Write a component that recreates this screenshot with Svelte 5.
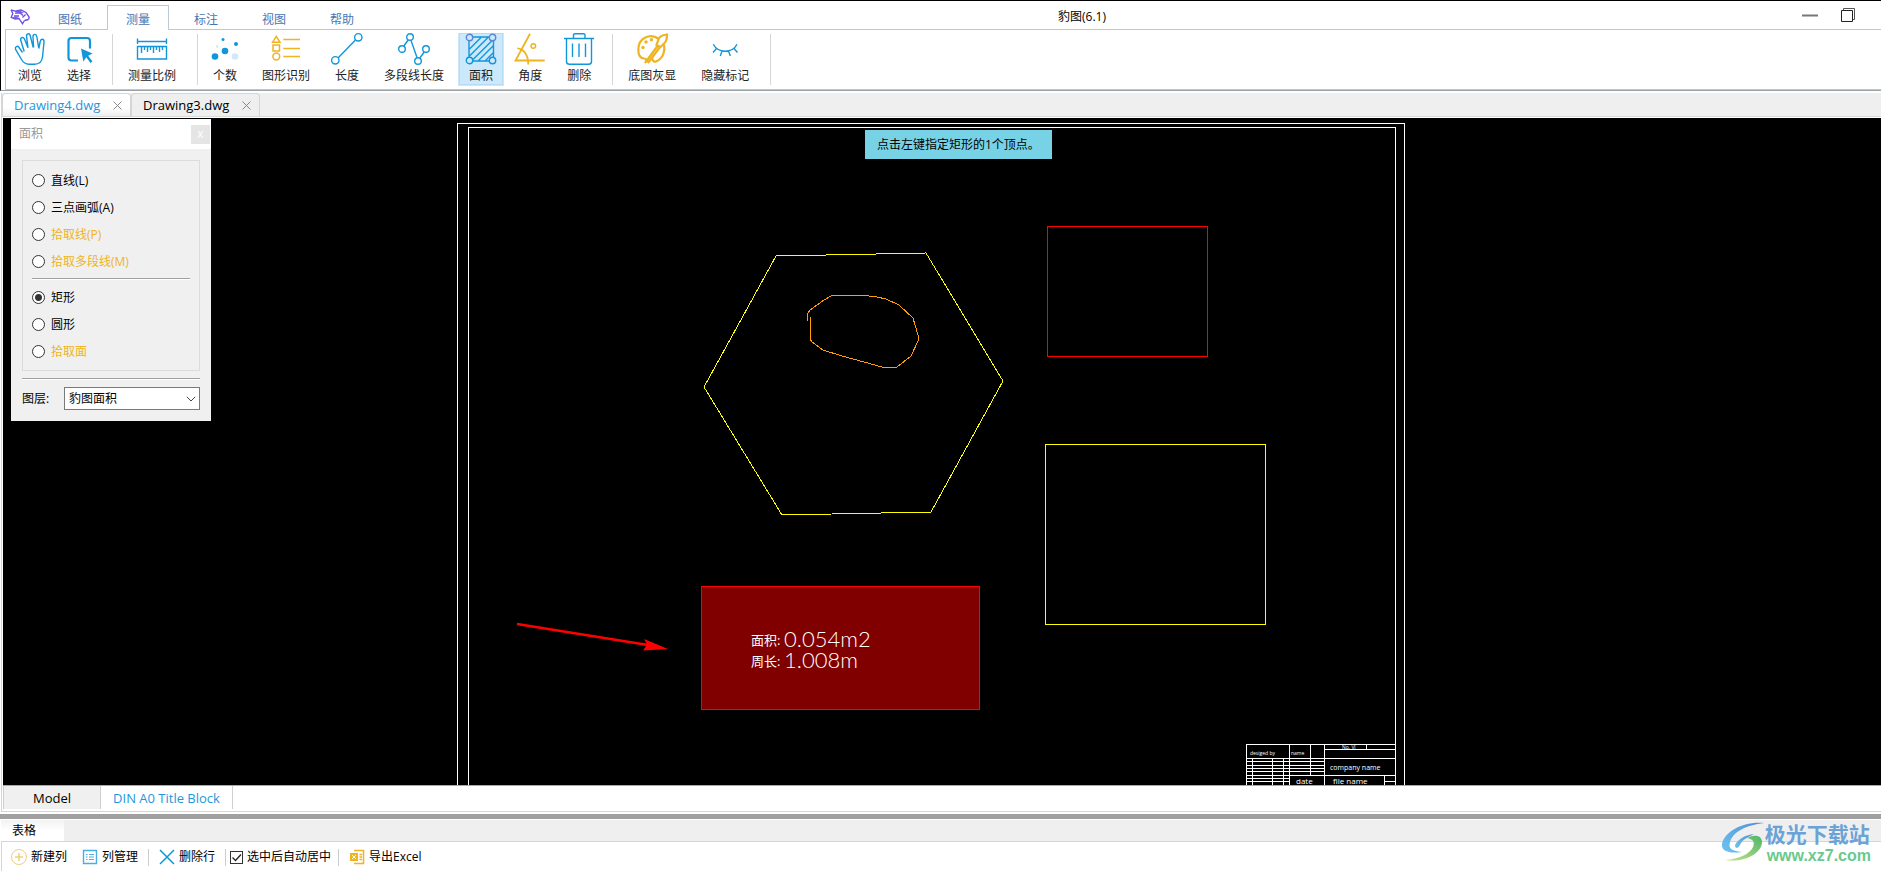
<script>
    const menus = ['图纸', '测量', '标注', '视图', '帮助']
    let menu = $state('测量')

    const groups = [
        [
            { id: 'hand', label: '浏览' },
            { id: 'select', label: '选择' }
        ],
        [{ id: 'ruler', label: '测量比例' }],
        [
            { id: 'count', label: '个数' },
            { id: 'shapes', label: '图形识别' },
            { id: 'length', label: '长度' },
            { id: 'polyline', label: '多段线长度' },
            { id: 'area', label: '面积' },
            { id: 'angle', label: '角度' },
            { id: 'trash', label: '删除' }
        ],
        [
            { id: 'palette', label: '底图灰显' },
            { id: 'eye', label: '隐藏标记' }
        ]
    ]
    let tool = $state('area')

    const files = ['Drawing4.dwg', 'Drawing3.dwg']
    let file = $state('Drawing4.dwg')

    const drawModes = [
        { value: 'line', label: '直线(L)' },
        { value: 'arc', label: '三点画弧(A)' },
        { value: 'pick', label: '拾取线(P)', gold: true },
        { value: 'pickpoly', label: '拾取多段线(M)', gold: true }
    ]
    const shapeModes = [
        { value: 'rect', label: '矩形' },
        { value: 'circle', label: '圆形' },
        { value: 'face', label: '拾取面', gold: true }
    ]
    let mode = $state('rect')

    const sheets = ['Model', 'DIN A0 Title Block']
    let sheet = $state('DIN A0 Title Block')
    let autoCenter = $state(true)
</script>

{#snippet icon(id)}
    <svg class="icon" viewBox="0 0 32 32" aria-hidden="true">
        {#if id === 'hand'}
            <path class="b" d="M8.5 19.5 5 14.5C3.5 12.3.7 13.6 1.5 16.2L7.5 26.500C9.500 30 12 31.200 15 31.200H20.500C25.500 31.200 28 28.500 28.500 24L30 9C30.200 5.600 26.800 5.200 26.200 8.500L24.800 15.500M24.800 15.500 22.800 3.500C22.300.5 18.800.8 19 3.800L19.600 14.500M19.200 14.500 16.200 2.500C15.400-.3 12 .6 12.600 3.600L14 14.800M14 14.800 10.500 6C9.300 3.200 5.800 4.500 6.800 7.500L10.200 18.500" />
        {:else if id === 'select'}
            <path class="b thick" d="M15 27.500H8.500A3 3 0 0 1 5.500 24.500V8A3 3 0 0 1 8.500 5H24A3 3 0 0 1 27 8V15.500" />
            <path class="bf" d="M18 15.500 29.500 20.500 25.200 22.800 29.500 28.500 27.500 30 23.300 24.300 20.300 28.500Z" />
        {:else if id === 'ruler'}
            <path class="b" d="M1.500 5.500V11M30.500 5.500V11M1.500 8.500H30.500M1.500 13.500H30.500V26H1.500ZM5.500 14V20M8.500 14V17M11.500 14V19M14.500 14V17M17.500 14V20M20.500 14V17M23.500 14V19M26.500 14V17" />
        {:else if id === 'count'}
            <circle class="bf" cx="14" cy="6.500" r="1.500" />
            <circle class="bf" cx="27" cy="11" r="2" />
            <circle class="pale" cx="8" cy="13.500" r="1.300" />
            <circle class="bf" cx="16" cy="18" r="3.300" />
            <circle class="bf" cx="6" cy="23.500" r="3.300" />
            <circle class="pale" cx="26" cy="23.500" r="3.300" />
        {:else if id === 'shapes'}
            <path class="y" d="M6.300 3.500 10 9.200H2.600ZM3 12H9.500V18H3ZM13.300 6.500H30M13.300 15.500H30M13.300 23.500H30" />
            <circle class="y" cx="6.300" cy="23.500" r="3.400" />
        {:else if id === 'length'}
            <path class="b" d="M7 25 24.500 7" />
            <circle class="b" cx="27.300" cy="4.300" r="3.700" />
            <circle class="b" cx="4.300" cy="27.300" r="3.700" />
        {:else if id === 'polyline'}
            <path class="b" d="M5.800 13 10.200 7M13 7.500 19 24.500M21.800 25 26.200 19" />
            <circle class="b" cx="4" cy="16" r="3.300" />
            <circle class="b" cx="12" cy="4" r="3.300" />
            <circle class="b" cx="20" cy="28" r="3.300" />
            <circle class="b" cx="28" cy="16" r="3.300" />
        {:else if id === 'area'}
            <path class="b" d="M8 4H24M28.500 8V24M8 28H24M4 8V24M4.500 16 16 4.500M4.500 23 23 4.500M8 26.500 28 6.800M13 28 28.500 12.500M20 28 28.500 19.500" />
            <g class="corner">
                <circle cx="4.500" cy="4.500" r="3.200" />
                <circle cx="27.500" cy="4.500" r="3.200" />
                <circle class="b" cx="4.500" cy="27.500" r="3.200" />
                <circle class="b" cx="27.500" cy="27.500" r="3.200" />
            </g>
        {:else if id === 'angle'}
            <path class="y mid" d="M16 .8 1.500 27.500H30.700M3.300 15.300C9.500 15.500 14.500 22 14.300 31.500" />
            <circle class="y" cx="19.300" cy="13" r="2.300" />
        {:else if id === 'trash'}
            <path class="b" d="M1 5.500H31M10.500 5V2Q10.500.8 12 .8H20.500Q22 .8 22 2V5M3.500 5.500V28.500Q3.500 31.300 6.500 31.300H25.500Q28.500 31.300 28.500 28.500V5.500M9.500 10.500V24M16 10.500V24M22.500 10.500V24" />
        {:else if id === 'palette'}
            <path class="y thick" d="M23 6C14-.5 2.500 5 2.300 16.500C2.200 22 4 25 8 25.500C12 25.500 8 28 12.500 28.500M28 11.500C29.500 18 27 25.500 20 28.500C17 29.500 16 26 16 24" />
            <path class="y thick" d="M31 1.500C27 2 23 3.500 22.500 6.500L20.500 12 24.500 14 28.500 10C31 8 31 5 31 1.500ZM21.500 13 9 30M24 14 12 30" />
            <circle class="yf" cx="10" cy="9" r="1.700" />
            <circle class="yf" cx="15.500" cy="6.700" r="1.700" />
            <circle class="yf" cx="7" cy="14.500" r="1.700" />
        {:else if id === 'eye'}
            <path class="b" d="M4.300 11.300C9 20.500 23.500 20.500 28 11.300M7.500 15.500 4 19.500M13 18 11.300 23M19.500 18 21.300 23M25 15.500 28.500 19.500" />
        {/if}
    </svg>
{/snippet}

{#snippet radio(m)}
    <label class="radio" class:gold={m.gold}>
        <input type="radio" name="mode" value={m.value} bind:group={mode} />
        {m.label}
    </label>
{/snippet}

<div class="app">
    <header class="top">
        <div class="titlebar">
            <svg class="logo" viewBox="0 0 20 16" aria-hidden="true">
                <path d="M1 .8 5 2.200 11 1 16 3.500 19.200 8 18.500 10.500M1 .8 2.800 4.500 1.200 8.500 5 10 9 9.500 12.500 14.800 14.500 11.500" />
                <path d="M5 4.200 10 4 13 6.500M4 7 9 7M12.500 8.500 15.500 5.500M14.500 11.500 18.500 10.500" />
                <path class="solid" d="M5 2 10 1.500 14 4 11 4.500 6 3.500ZM1.500 8.500 6 7.500 9 9 6 10Z" />
            </svg>
            <nav class="menus">
                {#each menus as m}
                    <button class="menu" class:active={menu === m} onclick={() => (menu = m)}>{m}</button>
                {/each}
            </nav>
            <h1>豹图(6.1)</h1>
            <div class="winbtns">
                <button aria-label="最小化">
                    <svg viewBox="0 0 16 16"><path d="M0 8.500H16" stroke="#777" stroke-width="2" /></svg>
                </button>
                <button aria-label="还原">
                    <svg viewBox="0 0 16 16">
                        <path d="M3.500 3V1.500H14.500V12.500H13" fill="none" stroke="#555" />
                        <path d="M1.500 3.500H12.500V14.500H1.500Z" fill="#fff" stroke="#222" />
                    </svg>
                </button>
            </div>
        </div>
        <div class="ribbon">
            {#each groups as g}
                <div class="group">
                    {#each g as t}
                        <button class="tool" class:on={tool === t.id} onclick={() => (tool = t.id)}>
                            {@render icon(t.id)}
                            <span>{t.label}</span>
                        </button>
                    {/each}
                </div>
            {/each}
        </div>
    </header>

    <section class="work">
        <div class="files">
            {#each files as f}
                <div class="file" class:active={file === f}>
                    <button class="name" onclick={() => (file = f)}>{f}</button>
                    <button class="x" aria-label="关闭">
                        <svg viewBox="0 0 9 9"><path d="M.5.5 8.500 8.500M8.500.5.5 8.500" /></svg>
                    </button>
                </div>
            {/each}
        </div>

        <div class="canvas">
            <svg class="drawing" shape-rendering="crispEdges">
                <g fill="none" stroke="#fff">
                    <path d="M454.500 667V5.500H1401.500V667M465.500 667V9.500H1392.500V667" />
                    <!-- title block -->
                    <path d="M1243.500 667V626.500H1392M1243 640.500H1392M1286.500 626V667M1307.500 626V657M1321.500 626V667M1321 631.500H1392M1363.500 626V631" />
                    <path d="M1243 643.500H1322M1243 647.500H1322M1243 650.500H1322M1243 653.500H1322M1243 657.500H1392M1243 660.500H1287M1243 663.500H1287M1249.500 641V667M1269.500 641V667M1280.500 641V667M1381.500 657V667M1381 663.500H1392" />
                </g>
                <g class="stamp">
                    <text class="s" x="1247" y="637">desiged by</text>
                    <text class="s" x="1288" y="637">name</text>
                    <text class="s" x="1339" y="631">No. Vl</text>
                    <text class="m" x="1327" y="652">company name</text>
                    <text class="l" x="1293" y="666">date</text>
                    <text class="l" x="1330" y="666">file name</text>
                </g>
                <polygon points="773,138 923,135 1000,263 928,394 779,397 701,269" fill="none" stroke="#ff0" />
                <polyline points="805,203 804,197 807,192 821,182 828,178 833,177 857,177 874,179 883,181 896,187 910,200 915,217 915,223 908,238 894,249 879,249 861,244 839,238 820,232 809,224 807,221 807,199" fill="none" stroke="#ff9f00" />
                <rect x="1044.500" y="108.500" width="160" height="130" fill="none" stroke="#f00" />
                <rect x="1042.500" y="326.500" width="220" height="180" fill="none" stroke="#ff0" />
                <rect x="698.500" y="468.500" width="278" height="123" fill="#800000" stroke="#f00" />
                <g fill="#fff">
                    <text class="cn" x="748" y="527">面积:</text>
                    <text class="num" x="781" y="529">0.054m2</text>
                    <text class="cn" x="748" y="548">周长:</text>
                    <text class="num" x="781" y="550">1.008m</text>
                </g>
                <g shape-rendering="auto">
                    <path d="M514 506 645 527" stroke="#f00" stroke-width="2.500" />
                    <path d="M665 531 641 521 644 526.500 640 532.500Z" fill="#f00" />
                </g>
            </svg>
            <div class="prompt">点击左键指定矩形的1个顶点。</div>

            <aside class="panel">
                <div class="phead">
                    <h2>面积</h2>
                    <button aria-label="关闭面板">x</button>
                </div>
                <div class="pbody">
                    <div class="modes">
                        {#each drawModes as m}{@render radio(m)}{/each}
                        <hr />
                        {#each shapeModes as m}{@render radio(m)}{/each}
                    </div>
                    <hr class="wide" />
                    <div class="layer">
                        <label for="layer">图层:</label>
                        <div class="combo">
                            <select id="layer">
                                <option>豹图面积</option>
                            </select>
                            <svg viewBox="0 0 10 6" aria-hidden="true"><path d="M.8.8 5 5 9.200.8" /></svg>
                        </div>
                    </div>
                </div>
            </aside>
        </div>

        <div class="sheets">
            {#each sheets as s}
                <button class="sheet" class:active={sheet === s} onclick={() => (sheet = s)}>{s}</button>
            {/each}
        </div>
    </section>

    <div class="splitter"></div>

    <section class="grid">
        <div class="gridhead"><h2>表格</h2></div>
        <div class="gridbar">
            <button>
                <svg viewBox="0 0 16 16" fill="none" stroke="#f0cf7c"><circle cx="8" cy="8" r="7.500" /><path d="M4 8H12M8 4V12" stroke-width="1.500" /></svg>
                新建列
            </button>
            <button class="manage">
                <svg viewBox="0 0 16 16" fill="none" stroke="#4aaee2"><path d="M1.500 1.500H14.500V14.500H1.500Z" stroke-width="1.400" /><path d="M4 5.500H5.500M7 5.500H12M4 8H5.500M7 8H12M4 10.500H5.500M7 10.500H12" /></svg>
                列管理
            </button>
            <i class="sep"></i>
            <button>
                <svg viewBox="0 0 16 16" fill="none" stroke="#1296db" stroke-width="1.500"><path d="M1 1 15 15M15 1 1 15" /></svg>
                删除行
            </button>
            <i class="sep tight"></i>
            <label class="check">
                <input type="checkbox" bind:checked={autoCenter} />
                选中后自动居中
            </label>
            <i class="sep last"></i>
            <button>
                <svg viewBox="0 0 16 16"><path d="M5 1.500H14.500V14.500H5" fill="none" stroke="#eeb422" stroke-width="1.500" /><path d="M1 4H9V12H1Z" fill="#eeb422" /><path d="M3 6 7 10M7 6 3 10" stroke="#fff" /><path d="M10.500 5.500H13M10.500 8H13M10.500 10.500H13" stroke="#eeb422" stroke-width="1.300" /></svg>
                导出Excel
            </button>
        </div>
    </section>

    <div class="brand">
        <svg viewBox="0 0 44 42" aria-hidden="true">
            <defs>
                <linearGradient id="sky" x1="1" y1="0" x2="0" y2="1">
                    <stop offset="0" stop-color="#4f8fd6" />
                    <stop offset="1" stop-color="#6fc4ee" />
                </linearGradient>
                <linearGradient id="leaf" x1="1" y1="0" x2="0" y2="1">
                    <stop offset="0" stop-color="#4fb56a" />
                    <stop offset="1" stop-color="#c9e58a" />
                </linearGradient>
            </defs>
            <path fill="url(#sky)" d="M43 2C22 0 3 11 1 23C0 30 8 33 21 31C10 30 7 27 9 21C12 11 25 4 43 2Z" />
            <path fill="url(#sky)" d="M14 24C18 17 25 14 33 13C27 16 21 19 19 24C17 28 14 28 14 24Z" />
            <path fill="url(#leaf)" d="M26 17C33 13 41 14 41 21C41 32 24 42 4 39C18 38 29 33 32 26C34 21 32 18 26 17Z" />
        </svg>
        <div>
            <strong>极光下载站</strong>
            <span>www.xz7.com</span>
        </div>
    </div>
</div>

<style>
    :global(body) {
        margin: 0;
        background: #fff;
    }
    .app {
        position: relative;
        display: flex;
        flex-direction: column;
        min-height: 100vh;
        overflow: hidden;
        font: 12px/18px 'Open Sans', 'Noto Sans CJK SC', sans-serif;
        color: #000;
    }
    button {
        margin: 0;
        padding: 0;
        border: 0;
        background: none;
        font: inherit;
        color: inherit;
        white-space: nowrap;
    }
    h1, h2 {
        margin: 0;
        font: inherit;
    }

    /* title bar + ribbon */
    .top {
        border-top: 1px solid #000;
        border-left: 1px solid #000;
        border-bottom: 1px solid #9aa3a8;
    }
    .titlebar {
        display: flex;
        height: 28px;
        padding-left: 9px;
    }
    .logo {
        width: 20px;
        height: 16px;
        margin: 8px 9px 0 0;
        fill: none;
        stroke: #6b4be6;
        stroke-width: 1.3;
    }
    .logo .solid {
        fill: #7a5cf0;
        stroke: none;
    }
    .menus {
        display: flex;
        align-items: flex-end;
        gap: 6px;
    }
    .menu {
        box-sizing: border-box;
        width: 62px;
        height: 24px;
        padding-top: 4px;
        border: 1px solid transparent;
        border-bottom: 0;
        color: #4a76b0;
        position: relative;
    }
    .menu.active {
        height: 25px;
        margin-bottom: -1px;
        background: #fff;
        border-color: #b9cbd9;
        z-index: 1;
    }
    h1 {
        flex: 1;
        padding-top: 7px;
        text-align: center;
    }
    .winbtns {
        display: flex;
        width: 90px;
    }
    .winbtns button {
        width: 38px;
        height: 28px;
    }
    .winbtns svg {
        display: block;
        width: 16px;
        height: 16px;
        margin: 0 auto;
    }
    .ribbon {
        display: flex;
        height: 53px;
        margin-left: 4px;
        padding: 3px 0 3px 1px;
        border: 1px solid #bcc8d0;
        border-right: 0;
    }
    .group {
        display: flex;
        gap: 3px;
        padding-right: 10px;
        margin-right: 4px;
        border-right: 1px solid transparent;
        border-image: linear-gradient(transparent 2px, #d5d5d5 2px, #d5d5d5 51px, transparent 51px) 1;
    }
    .tool {
        box-sizing: border-box;
        display: flex;
        flex-direction: column;
        align-items: center;
        height: 53px;
        padding: 0 10px;
        border: 1px solid transparent;
        border-top: 0;
        color: #222;
    }
    .tool.on {
        background: #cce8fb;
        box-shadow: inset 0 0 0 1px #b5dbf5;
    }
    .icon {
        display: block;
        width: 32px;
        height: 32px;
        margin: 0 -4px;
        overflow: visible;
    }
    .tool span {
        margin-top: 2px;
    }
    .b {
        fill: none;
        stroke: #1296db;
        stroke-width: 1.4;
    }
    .y {
        fill: none;
        stroke: #eeb422;
        stroke-width: 1.5;
    }
    .mid {
        stroke-width: 1.8;
    }
    .thick {
        stroke-width: 2.2;
    }
    .bf {
        fill: #1296db;
    }
    .yf {
        fill: #eeb422;
    }
    .pale {
        fill: #d0e9f8;
    }
    .corner circle {
        fill: #cce8fb;
        stroke: #5b86d6;
        stroke-width: 1.4;
    }
    .corner .b {
        stroke: #1296db;
    }

    /* document area */
    .work {
        flex: 1;
        display: flex;
        flex-direction: column;
        margin: 2px 0 2px 1px;
        border-left: 1px solid #d5d5d5;
        border-bottom: 1px solid #d5d5d5;
    }
    .files {
        box-sizing: border-box;
        display: flex;
        height: 24px;
        background: #efefef;
        border-bottom: 1px solid #d9d9d9;
    }
    .file {
        box-sizing: border-box;
        display: flex;
        align-items: center;
        justify-content: space-between;
        width: 129px;
        padding: 0 8px 0 11px;
        border: 1px solid #d5d5d5;
        border-bottom: 0;
        border-radius: 4px 4px 0 0;
        font-size: 13px;
    }
    .file.active {
        background: linear-gradient(#fff 60%, #eee);
        color: #1e96dc;
    }
    .x {
        display: flex;
        padding: 0;
    }
    .x svg {
        width: 9px;
        height: 9px;
        stroke: #888;
    }
    .canvas {
        position: relative;
        flex: 1;
        min-height: 480px;
        margin: 1px 0 0 1px;
        background: #000;
        border-bottom: 1px solid #aaa;
    }
    .drawing {
        position: absolute;
        width: 100%;
        height: 100%;
    }
    .stamp {
        fill: #fff;
    }
    .stamp .s {
        font-size: 5px;
    }
    .stamp .m {
        font-size: 7px;
    }
    .stamp .l {
        font-size: 8px;
    }
    .cn {
        font-size: 13px;
    }
    .num {
        font: 300 22px Lato, sans-serif;
    }
    .prompt {
        position: absolute;
        top: 12px;
        left: 862px;
        padding: 6px 12px 5px;
        background: #78d2e6;
        white-space: nowrap;
    }

    /* floating tool panel */
    .panel {
        position: absolute;
        top: 1px;
        left: 8px;
        width: 200px;
        background: #f0f0f0;
    }
    .phead {
        display: flex;
        justify-content: space-between;
        align-items: center;
        height: 30px;
        padding: 0 1px 0 8px;
        background: #fff;
        color: #999;
    }
    .phead button {
        width: 19px;
        height: 19px;
        background: #e5e5e5;
        color: #fff;
        line-height: 16px;
    }
    .pbody {
        padding: 11px;
    }
    .modes {
        padding: 6px 9px 5px;
        border: 1px solid #dcdcdc;
    }
    .radio {
        display: flex;
        align-items: center;
        gap: 6px;
        height: 27px;
    }
    .gold {
        color: #eeb422;
    }
    .radio input {
        appearance: none;
        width: 13px;
        height: 13px;
        margin: 0;
        border: 1px solid #333;
        border-radius: 50%;
        background: #fff;
    }
    .radio input:checked {
        background: radial-gradient(#333 3px, #fff 4px);
    }
    hr {
        height: 1px;
        margin: 3px 0 4px;
        border: 0;
        border-top: 1px solid #a0a0a0;
        background: #fff;
    }
    hr.wide {
        margin: 7px 0;
    }
    .layer {
        display: flex;
        align-items: center;
        justify-content: space-between;
    }
    .combo {
        position: relative;
        width: 136px;
    }
    select {
        display: block;
        appearance: none;
        width: 100%;
        height: 23px;
        padding: 0 4px;
        border: 1px solid #7a7a7a;
        border-radius: 0;
        background: #fff;
        font: inherit;
        color: #000;
    }
    .combo svg {
        position: absolute;
        right: 4px;
        top: 9px;
        width: 10px;
        height: 6px;
        fill: none;
        stroke: #444;
    }

    .sheets {
        display: flex;
        height: 25px;
        margin-left: 1px;
    }
    .sheet {
        box-sizing: border-box;
        height: 23px;
        padding: 0 12px;
        border-right: 1px solid #d0d0d0;
        font-size: 13px;
    }
    .sheet:first-child {
        padding: 0 29px;
        background: #f0f0f0;
        border-left: 1px solid #d0d0d0;
    }
    .sheet.active {
        color: #1e96dc;
    }
    .splitter {
        height: 5px;
        background: #a0a0a0;
    }

    /* table pane */
    .grid {
        padding: 1px 0 0 1px;
    }
    .gridhead {
        height: 21px;
        background: #efefef;
    }
    .gridhead h2 {
        width: 52px;
        height: 21px;
        padding-left: 11px;
        line-height: 22px;
        background: linear-gradient(#f2f2f2, #fff 50%);
    }
    .gridbar {
        display: flex;
        align-items: center;
        height: 28px;
        padding: 1px 0 0 9px;
        border-top: 1px solid #d5d5d5;
        border-left: 1px solid #d5d5d5;
    }
    .gridbar button,
    .check {
        display: flex;
        align-items: center;
        gap: 4px;
    }
    .gridbar svg {
        width: 16px;
        height: 16px;
    }
    .gridbar .manage {
        margin-left: 15px;
    }
    .sep {
        width: 1px;
        height: 17px;
        margin: 0 10px;
        background: #ccc;
    }
    .tight {
        margin-right: 4px;
    }
    .last {
        margin-left: 7px;
    }
    .check input {
        appearance: none;
        width: 13px;
        height: 13px;
        margin: 0;
        border: 1px solid #333;
        background: #fff;
    }
    .check input:checked {
        background: url("data:image/svg+xml,%3Csvg xmlns='http://www.w3.org/2000/svg' viewBox='0 0 11 11'%3E%3Cpath d='M1.500 5.500 4.500 8.500 10 2.500' fill='none' stroke='%23222' stroke-width='1.300'/%3E%3C/svg%3E");
    }

    .brand {
        position: absolute;
        right: 10px;
        bottom: 6px;
        display: flex;
    }
    .brand svg {
        width: 44px;
        height: 42px;
    }
    .brand div {
        display: flex;
        flex-direction: column;
    }
    .brand strong {
        font: bold 21px/24px 'Noto Sans CJK SC', sans-serif;
        color: #6ba3d6;
    }
    .brand span {
        padding: 2px 0 0 2px;
        font: bold 16px/18px 'Liberation Sans', sans-serif;
        color: #6bc98b;
    }
</style>
